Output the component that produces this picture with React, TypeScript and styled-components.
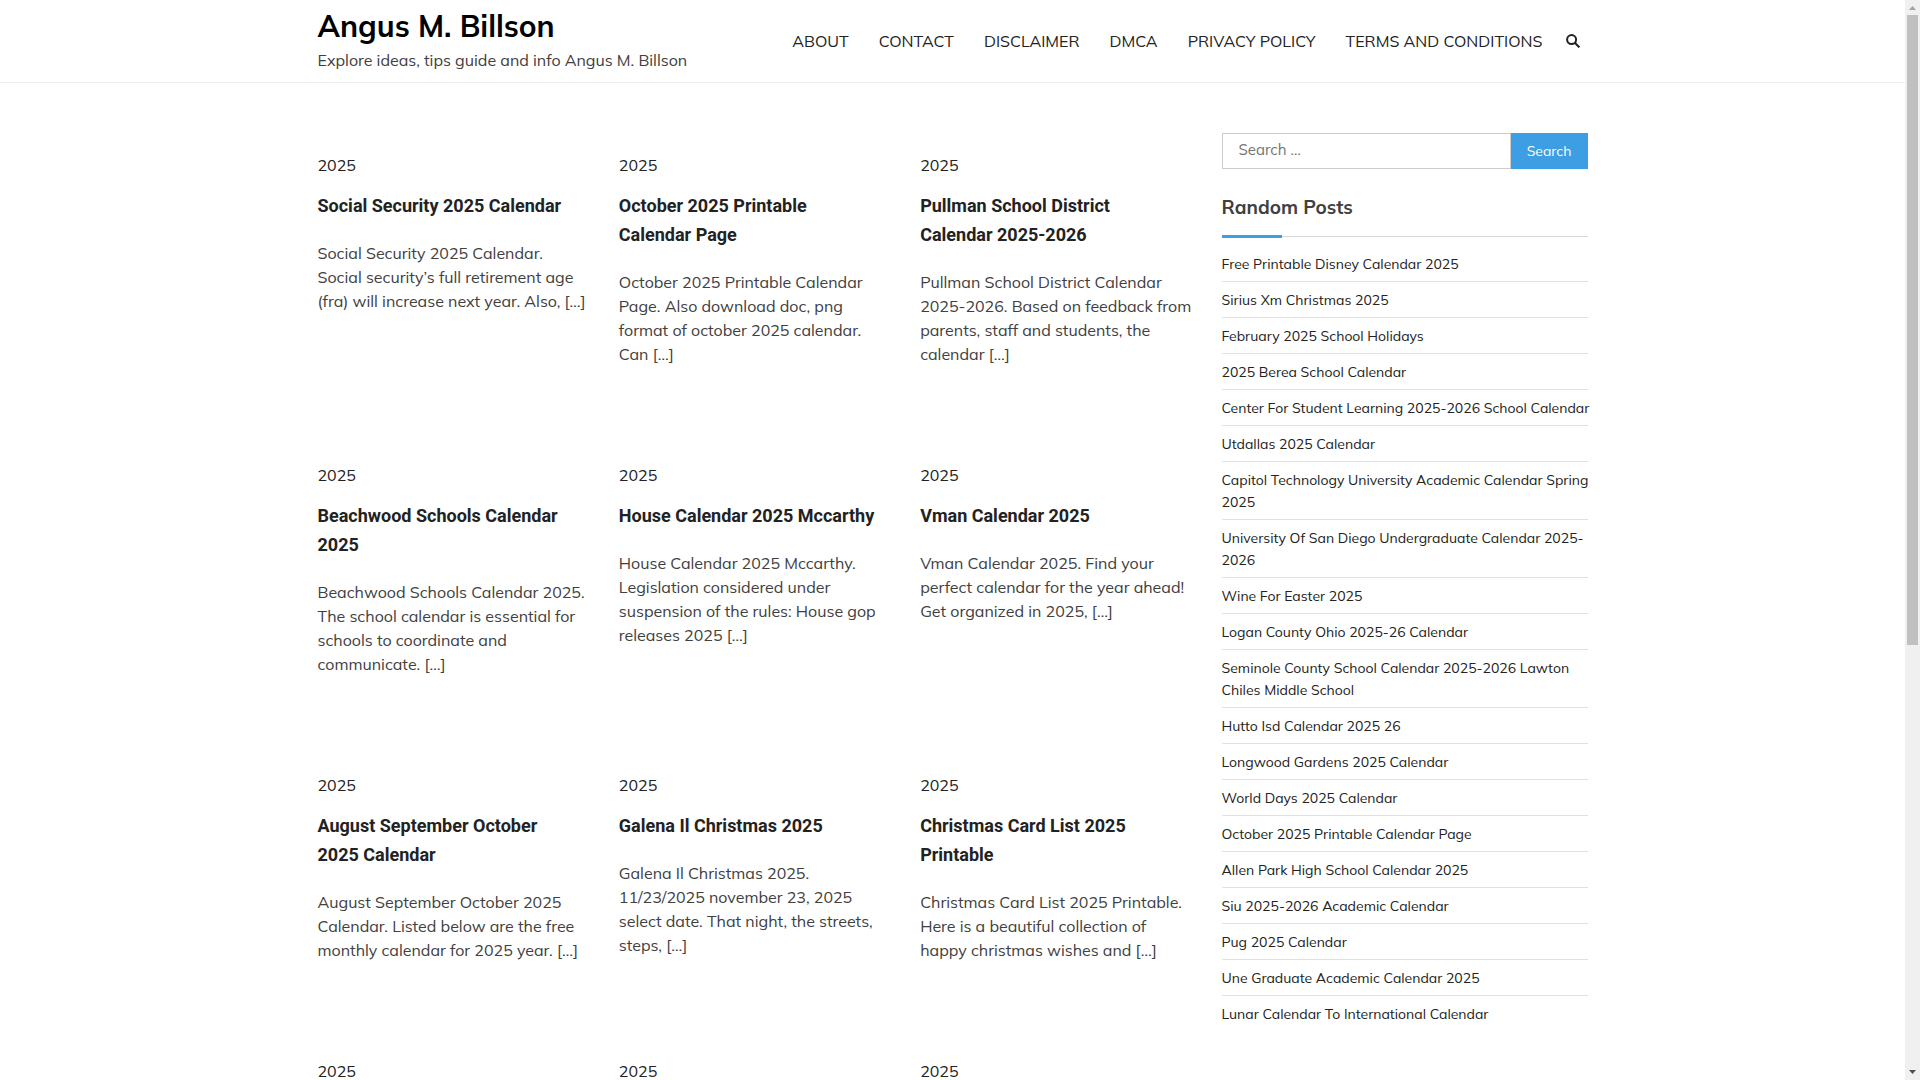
import React from "react";
import styled, { createGlobalStyle } from "styled-components";

const GlobalStyle = createGlobalStyle`
  *, *::before, *::after { box-sizing: border-box; }
  body {
    margin: 0;
    background: #fff;
    color: #404040;
    font-family: Mulish, Lato, "Open Sans", sans-serif;
    font-size: 16px;
    line-height: 24px;
  }
  a { color: #222; text-decoration: none; }
  a:hover { color: #3d9ee3; }
  h1, h2, p, ul { margin: 0; padding: 0; font-weight: inherit; }
  ul { list-style: none; }
`;

const Viewport = styled.div`
  display: flex;
  height: 100vh;
  overflow: hidden;
`;

const Page = styled.div`
  flex: 1;
  min-width: 0;
  overflow: hidden;
`;

const Container = styled.div`
  max-width: 1300px;
  margin: 0 auto;
  padding: 0 15px;
`;

const Header = styled.header`
  border-bottom: 1px solid #eee;
`;

const HeaderRow = styled(Container)`
  display: flex;
  align-items: center;
  justify-content: space-between;
`;

const Branding = styled.div`
  padding: 4px 0 10px;
`;

const SiteTitle = styled.p`
  font-size: 30px;
  line-height: 44px;
  font-weight: 700;
  a { color: #000; }
`;

const Nav = styled.nav`
  display: flex;
  align-items: center;
  padding-right: 8px;
`;

const Menu = styled.ul`
  display: flex;
  gap: 30px;
  margin-right: 23px;
  text-transform: uppercase;
`;

const IconButton = styled.button`
  display: flex;
  padding: 0;
  border: 0;
  background: none;
  color: #222;
  cursor: pointer;
`;

const Columns = styled(Container)`
  display: flex;
  align-items: flex-start;
  gap: 30px;
  padding-top: 50px;
`;

const PostGrid = styled.main`
  flex: 1;
  display: grid;
  grid-template-columns: repeat(3, minmax(0, 1fr));
  gap: 97px 30px;
  padding-top: 20px;
`;

const PostTitle = styled.h2`
  margin: 14px 0 21px;
  padding-right: 10px;
  font-family: Roboto, sans-serif;
  font-size: 18px;
  line-height: 29px;
  font-weight: 700;
`;

const Sidebar = styled.aside`
  width: 366px;
  flex: none;
`;

const SearchForm = styled.form`
  display: flex;
  height: 36px;
`;

const SearchInput = styled.input`
  flex: 1;
  min-width: 0;
  padding: 0 16px 2px;
  border: 1px solid #ccc;
  font: inherit;
  font-size: 15px;
  &::placeholder { color: #757575; }
`;

const SearchButton = styled.button`
  padding: 0 16px;
  border: 0;
  background: #3d9ee3;
  color: #fff;
  font: inherit;
  font-size: 14px;
`;

const WidgetTitle = styled.h2`
  display: flex;
  flex-direction: column;
  margin: 24px 0 8px;
  font-size: 19px;
  line-height: 28px;
  font-weight: 700;
  &::after {
    content: "";
    height: 3px;
    margin-top: 14px;
    background:
      linear-gradient(#3d9ee3, #3d9ee3) 0 0 / 60px 3px no-repeat,
      linear-gradient(#d8d8d8, #d8d8d8) 0 1px / 100% 1px no-repeat;
  }
`;

const PostList = styled.ul`
  font-size: 14px;
  line-height: 22px;
`;

const PostListItem = styled.li`
  padding: 7px 0 6px;
  border-bottom: 1px solid #e1e1e1;
  &:last-child { border-bottom: 0; }
  a {
    display: block;
    margin-right: -4px;
  }
`;

const ScrollTrack = styled.div`
  flex: none;
  display: flex;
  flex-direction: column;
  align-items: center;
  width: 15px;
  background: #f0f0f0;
`;

const ScrollArrow = styled.svg`
  flex: none;
  width: 15px;
  height: 15px;
`;

const ScrollRail = styled.div`
  flex: 1;
`;

const ScrollThumb = styled.div`
  width: 11px;
  height: 60%;
  background: #c0c0c0;
`;

const menu = ["About", "Contact", "Disclaimer", "DMCA", "Privacy Policy", "Terms and Conditions"];

type Post = { title?: string; excerpt?: string };

const posts: Post[] = [
  { title: "Social Security 2025 Calendar", excerpt: "Social Security 2025 Calendar. Social security’s full retirement age (fra) will increase next year. Also, […]" },
  { title: "October 2025 Printable Calendar Page", excerpt: "October 2025 Printable Calendar Page. Also download doc, png format of october 2025 calendar. Can […]" },
  { title: "Pullman School District Calendar 2025-2026", excerpt: "Pullman School District Calendar 2025-2026. Based on feedback from parents, staff and students, the calendar […]" },
  { title: "Beachwood Schools Calendar 2025", excerpt: "Beachwood Schools Calendar 2025. The school calendar is essential for schools to coordinate and communicate. […]" },
  { title: "House Calendar 2025 Mccarthy", excerpt: "House Calendar 2025 Mccarthy. Legislation considered under suspension of the rules: House gop releases 2025 […]" },
  { title: "Vman Calendar 2025", excerpt: "Vman Calendar 2025. Find your perfect calendar for the year ahead! Get organized in 2025, […]" },
  { title: "August September October 2025 Calendar", excerpt: "August September October 2025 Calendar. Listed below are the free monthly calendar for 2025 year. […]" },
  { title: "Galena Il Christmas 2025", excerpt: "Galena Il Christmas 2025. 11/23/2025 november 23, 2025 select date. That night, the streets, steps, […]" },
  { title: "Christmas Card List 2025 Printable", excerpt: "Christmas Card List 2025 Printable. Here is a beautiful collection of happy christmas wishes and […]" },
  {},
  {},
  {},
];

const randomPosts = [
  "Free Printable Disney Calendar 2025",
  "Sirius Xm Christmas 2025",
  "February 2025 School Holidays",
  "2025 Berea School Calendar",
  "Center For Student Learning 2025-2026 School Calendar",
  "Utdallas 2025 Calendar",
  "Capitol Technology University Academic Calendar Spring 2025",
  "University Of San Diego Undergraduate Calendar 2025-2026",
  "Wine For Easter 2025",
  "Logan County Ohio 2025-26 Calendar",
  "Seminole County School Calendar 2025-2026 Lawton Chiles Middle School",
  "Hutto Isd Calendar 2025 26",
  "Longwood Gardens 2025 Calendar",
  "World Days 2025 Calendar",
  "October 2025 Printable Calendar Page",
  "Allen Park High School Calendar 2025",
  "Siu 2025-2026 Academic Calendar",
  "Pug 2025 Calendar",
  "Une Graduate Academic Calendar 2025",
  "Lunar Calendar To International Calendar",
];

export default function App() {
  return (
    <>
      <GlobalStyle />
      <Viewport>
        <Page>
          <Header>
            <HeaderRow>
              <Branding>
                <SiteTitle><a href="#home">Angus M. Billson</a></SiteTitle>
                <p>Explore ideas, tips guide and info Angus M. Billson</p>
              </Branding>
              <Nav>
                <Menu>
                  {menu.map((label) => (
                    <li key={label}><a href="#page">{label}</a></li>
                  ))}
                </Menu>
                <IconButton type="button" aria-label="Open search">
                  <svg width="14" height="14" viewBox="0 0 14 14" fill="none" stroke="currentColor" strokeWidth="2">
                    <circle cx="5.6" cy="5.6" r="4.5" />
                    <path d="M8.800 8.800 13.400 13.400" />
                  </svg>
                </IconButton>
              </Nav>
            </HeaderRow>
          </Header>
          <Columns>
            <PostGrid>
              {posts.map(({ title, excerpt }, i) => (
                <article key={i}>
                  <a href="#2025">2025</a>
                  {title && <PostTitle><a href="#post">{title}</a></PostTitle>}
                  {excerpt && <p>{excerpt}</p>}
                </article>
              ))}
            </PostGrid>
            <Sidebar>
              <SearchForm role="search">
                <SearchInput type="search" aria-label="Search for" placeholder="Search …" />
                <SearchButton type="submit">Search</SearchButton>
              </SearchForm>
              <WidgetTitle>Random Posts</WidgetTitle>
              <PostList>
                {randomPosts.map((title) => (
                  <PostListItem key={title}><a href="#post">{title}</a></PostListItem>
                ))}
              </PostList>
            </Sidebar>
          </Columns>
        </Page>
        <ScrollTrack aria-hidden="true">
          <ScrollArrow viewBox="0 0 15 15"><path d="M4 10 7.500 6 11 10z" fill="#a3a3a3" /></ScrollArrow>
          <ScrollRail><ScrollThumb /></ScrollRail>
          <ScrollArrow viewBox="0 0 15 15"><path d="M4 5 7.500 9 11 5z" fill="#505050" /></ScrollArrow>
        </ScrollTrack>
      </Viewport>
    </>
  );
}
